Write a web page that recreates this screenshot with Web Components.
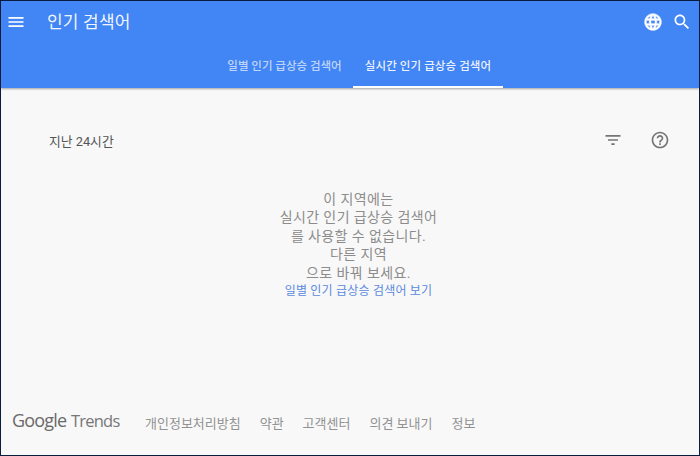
<!DOCTYPE html>
<html lang="ko"><head><meta charset="utf-8"><title>인기 검색어</title>
<style>
html,body{margin:0;padding:0;background:#f8f8f8}
body{font-family:Roboto,"Noto Sans CJK KR",sans-serif;width:700px;height:456px;overflow:hidden}
</style></head><body>
<trends-app>
<trends-header slot="header"></trends-header>
<trends-main slot="main"></trends-main>
<trends-footer slot="footer"></trends-footer>
</trends-app>
<script>
const FONT='Roboto,"Noto Sans CJK KR",sans-serif';
function def(name,html){customElements.define(name,class extends HTMLElement{constructor(){super();this.attachShadow({mode:'open'}).innerHTML=html;}});}
def('trends-app',`<style>:host{display:flex;flex-direction:column;box-sizing:border-box;width:700px;height:456px;border:1px solid #0b1d3f;background:#f8f8f8;font-family:${FONT}}
::slotted(trends-main){flex:1}</style><slot name="header"></slot><slot name="main"></slot><slot name="footer"></slot>`);
def('trends-header',`<style>:host{display:block;height:87px;background:#4285f4;box-shadow:0 1px 2px rgba(0,0,0,.35);color:#fff;position:relative}
.top{display:flex;align-items:center;height:42px}
.menu{width:20px;height:20px;margin-left:5px;display:block}
h1{margin:0 0 0 21px;font-size:17px;font-weight:400;line-height:42px;flex:1;letter-spacing:.2px;opacity:.92}
.ic{display:block;width:20px;height:20px}
.globe{margin-right:9px}.search{margin-right:7px}
.tabs{display:flex;height:45px;padding-left:215px}
.tab{font-size:11.5px;font-weight:500;box-sizing:border-box;height:45px;text-align:center;line-height:47px;white-space:nowrap}
.t1{width:137px;letter-spacing:0;color:rgba(255,255,255,.68)}
.on{width:150px;letter-spacing:.1px;color:rgba(255,255,255,.92);border-bottom:2px solid #fff}
</style>
<div class="top">
<svg class="menu" viewBox="0 0 24 24" fill="#fff"><path d="M3 18h18v-2H3v2zm0-5h18v-2H3v2zm0-7v2h18V6H3z"/></svg>
<h1>인기 검색어</h1>
<svg class="ic globe" viewBox="0 0 24 24" fill="#fff" stroke="#fff" stroke-width=".7"><path d="M11.99 2C6.47 2 2 6.48 2 12s4.47 10 9.99 10C17.52 22 22 17.52 22 12S17.52 2 11.99 2zm6.93 6h-2.95c-.32-1.25-.78-2.45-1.38-3.56 1.84.63 3.37 1.91 4.33 3.56zM12 4.04c.83 1.2 1.48 2.53 1.91 3.96h-3.82c.43-1.43 1.08-2.76 1.91-3.96zM4.26 14C4.1 13.36 4 12.69 4 12s.1-1.36.26-2h3.38c-.08.66-.14 1.32-.14 2 0 .68.06 1.34.14 2H4.26zm.82 2h2.95c.32 1.25.78 2.45 1.38 3.56-1.84-.63-3.37-1.9-4.33-3.56zm2.95-8H5.08c.96-1.66 2.49-2.93 4.33-3.56C8.81 5.55 8.35 6.75 8.03 8zM12 19.96c-.83-1.2-1.48-2.53-1.91-3.96h3.82c-.43 1.43-1.08 2.76-1.91 3.96zM14.34 14H9.66c-.09-.66-.16-1.32-.16-2 0-.68.07-1.35.16-2h4.68c.09.65.16 1.32.16 2 0 .68-.07 1.34-.16 2zm.25 5.56c.6-1.11 1.06-2.31 1.38-3.56h2.95c-.96 1.65-2.49 2.93-4.33 3.56zM16.36 14c.08-.66.14-1.32.14-2 0-.68-.06-1.34-.14-2h3.38c.16.64.26 1.31.26 2s-.1 1.36-.26 2h-3.38z"/></svg>
<svg class="ic search" viewBox="0 0 24 24" fill="#fff"><path d="M15.5 14h-.79l-.28-.27C15.41 12.59 16 11.11 16 9.5 16 5.91 13.09 3 9.5 3S3 5.91 3 9.5 5.91 16 9.5 16c1.61 0 3.09-.59 4.23-1.57l.27.28v.79l5 4.99L20.49 19l-4.99-5zm-6 0C7.01 14 5 11.99 5 9.5S7.01 5 9.5 5 14 7.01 14 9.5 11.99 14 9.5 14z"/></svg>
</div>
<div class="tabs"><div class="tab t1">일별 인기 급상승 검색어</div><div class="tab on">실시간 인기 급상승 검색어</div></div>`);
def('trends-main',`<style>:host{display:block;color:#3c4043}
.bar{display:flex;align-items:center;height:24px;margin-top:40px;padding:0 29px 0 48px}
.lbl{flex:1;font-size:12.8px;color:#555;padding-top:1px}
svg{display:block;width:20px;height:20px}
.f{margin-right:27px;fill:#757575}.h{fill:#757575}
.msg{margin-top:38px;padding-left:17px;text-align:center;font-size:14px;color:#8c8c8c;letter-spacing:.4px}
.msg div{height:18.4px;line-height:18.4px}
a{display:block;margin-top:1px;font-size:12px;line-height:16px;color:#5b8ae0;text-decoration:none;letter-spacing:.2px;font-weight:400}
</style>
<div class="bar"><div class="lbl">지난 24시간</div>
<svg class="f" viewBox="0 0 24 24"><path d="M10 18h4v-2h-4v2zM3 6v2h18V6H3zm3 7h12v-2H6v2z"/></svg>
<svg class="h" viewBox="0 0 24 24"><path d="M11 18h2v-2h-2v2zm1-16C6.48 2 2 6.48 2 12s4.48 10 10 10 10-4.48 10-10S17.52 2 12 2zm0 18c-4.41 0-8-3.59-8-8s3.59-8 8-8 8 3.59 8 8-3.59 8-8 8zm0-14c-2.21 0-4 1.79-4 4h2c0-1.1.9-2 2-2s2 .9 2 2c0 2-3 1.75-3 5h2c0-2.25 3-2.5 3-5 0-2.21-1.79-4-4-4z"/></svg></div>
<div class="msg"><div>이 지역에는</div><div>실시간 인기 급상승 검색어</div><div>를 사용할 수 없습니다.</div><div>다른 지역</div><div>으로 바꿔 보세요.</div><a href="#">일별 인기 급상승 검색어 보기</a></div>`);
def('trends-footer',`<style>:host{display:flex;align-items:center;height:62px;padding:0 0 0 11px;color:#80868b}
.logo{display:flex;align-items:baseline;gap:4.5px;font-family:"Open Sans",Roboto,sans-serif;font-size:18px;color:#6a6a6a;width:133px;padding-bottom:8px;white-space:nowrap}
.g{letter-spacing:-.8px}.t{font-size:16.5px;letter-spacing:-.75px;color:#777}
nav{display:flex;gap:19px;font-size:13px;color:#929292;padding-bottom:4px}
a{color:inherit;text-decoration:none;white-space:nowrap}
</style><div class="logo"><span class="g">Google</span><span class="t">Trends</span></div><nav><a href="#">개인정보처리방침</a><a href="#">약관</a><a href="#">고객센터</a><a href="#">의견 보내기</a><a href="#">정보</a></nav>`);
</script>
</body></html>
